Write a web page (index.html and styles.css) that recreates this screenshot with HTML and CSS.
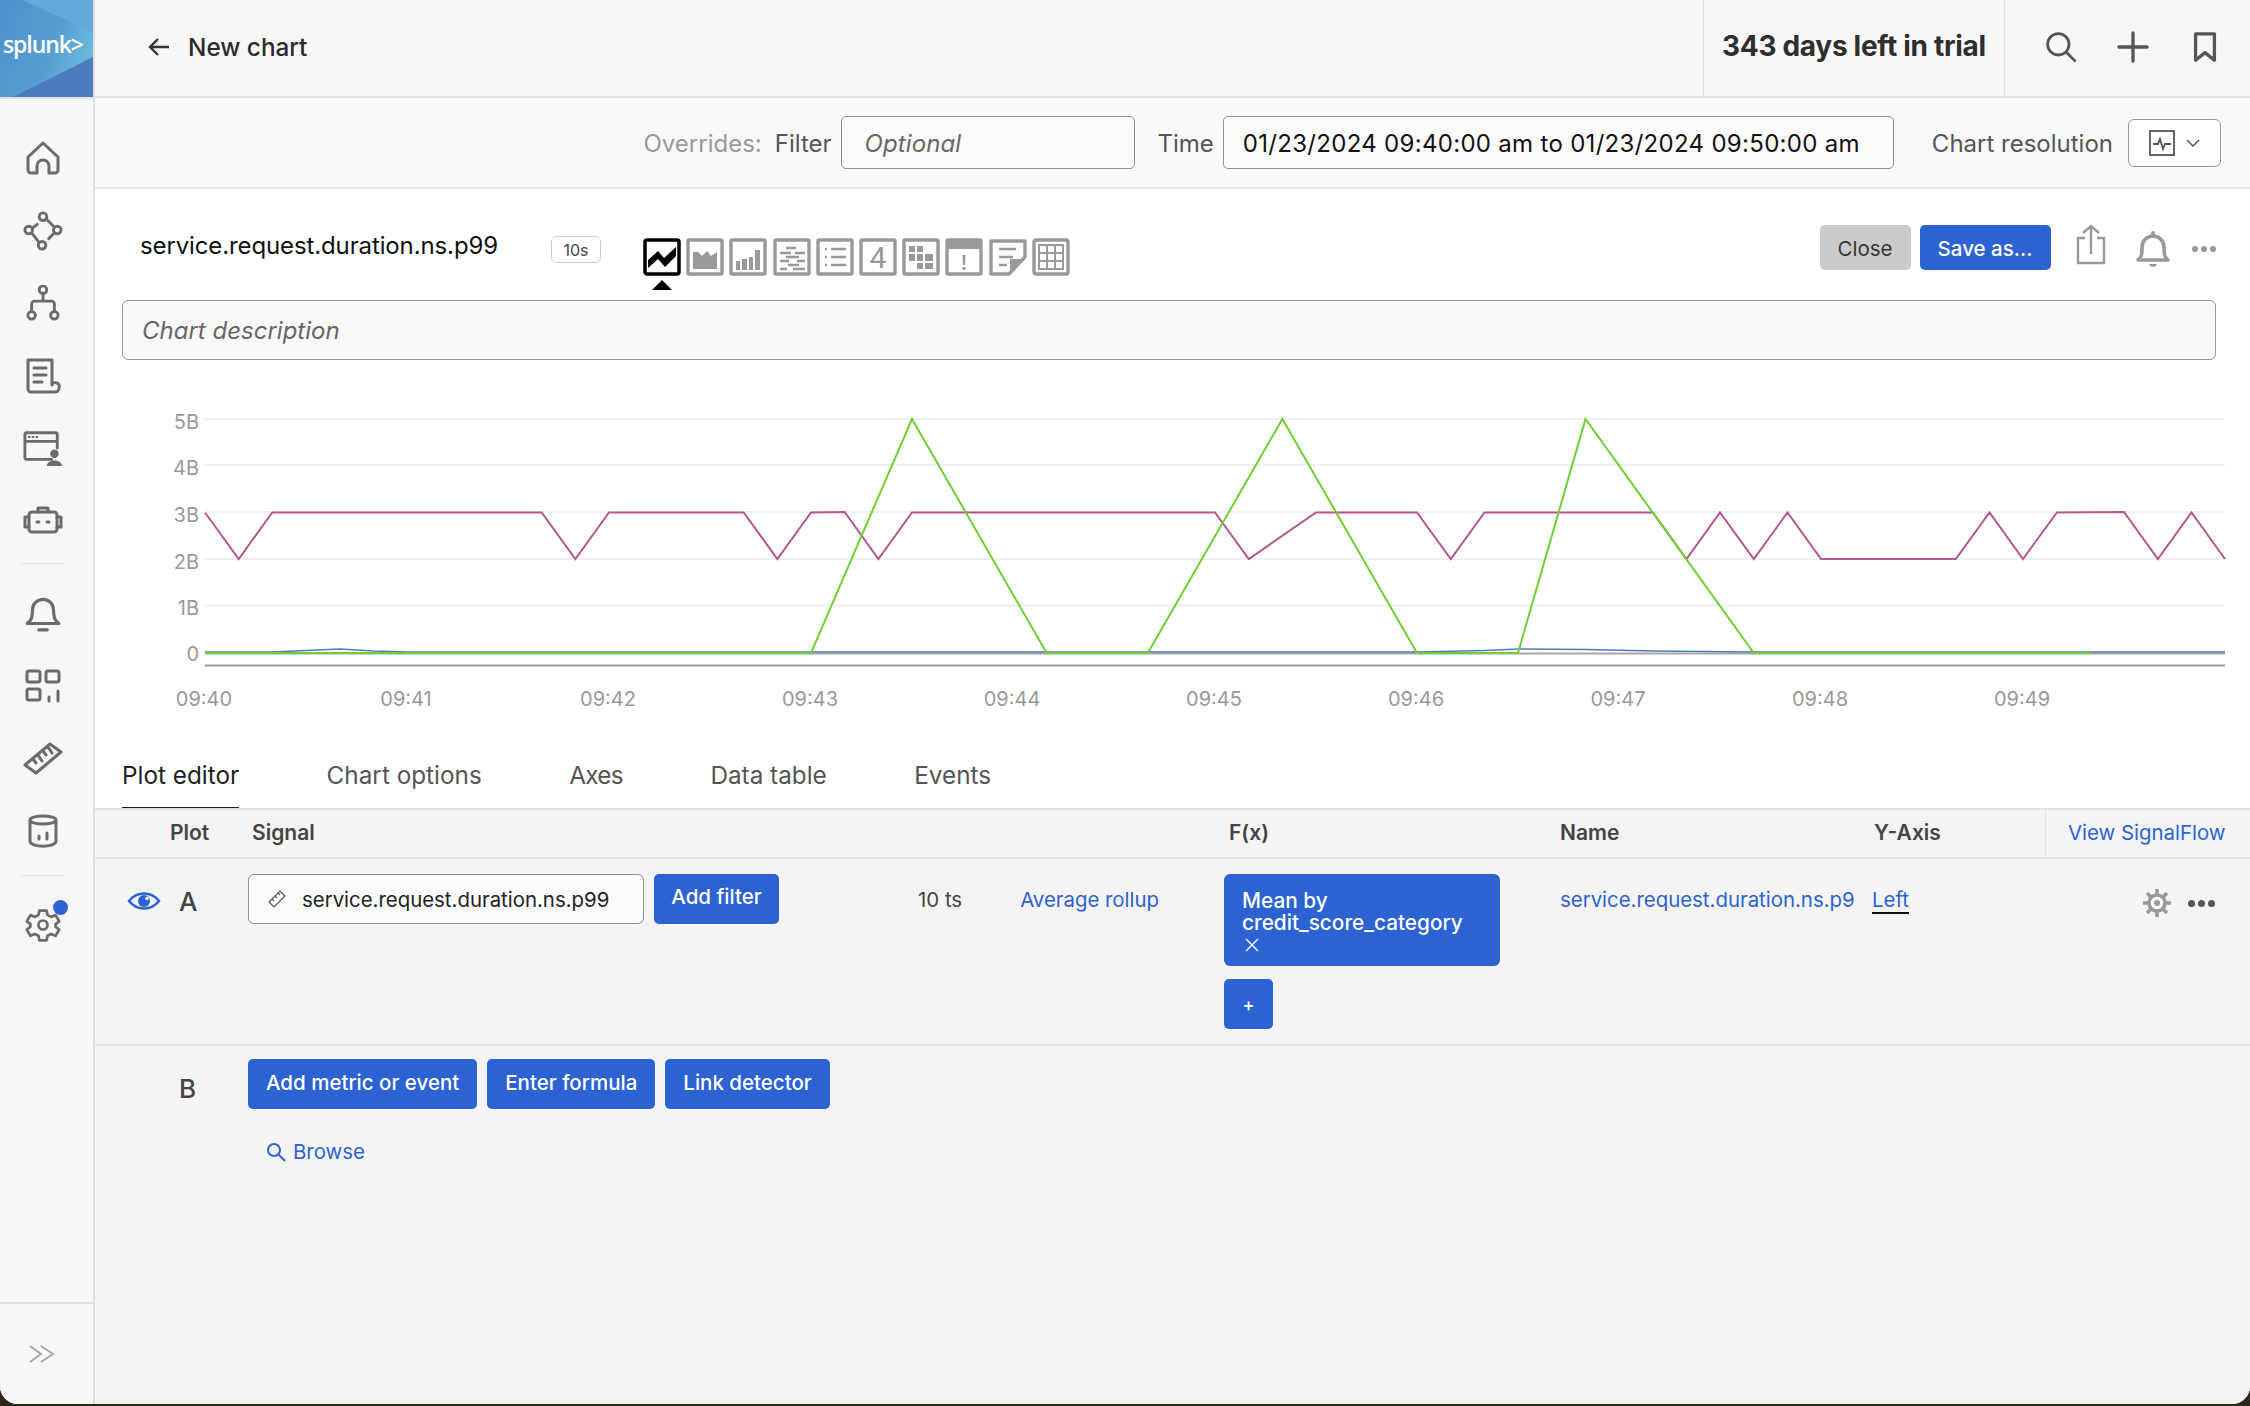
FILE: index.html
```html
<!DOCTYPE html>
<html lang="en">
<head>
    <meta charset="UTF-8">
    <title>New chart</title>
    <link rel="stylesheet" href="styles.css">
</head>
<body>
<div class="app">

    <!-- left nav -->
    <aside class="sidebar">
        <svg class="logo" viewBox="0 0 93 97">
            <defs>
                <linearGradient id="logoMid" x1="0" y1="0.2" x2="1" y2="0.6">
                    <stop offset="0" stop-color="#4b93cb"/>
                    <stop offset="0.6" stop-color="#569ed2"/>
                    <stop offset="1" stop-color="#6cbcdc"/>
                </linearGradient>
            </defs>
            <rect width="93" height="97" fill="url(#logoMid)"/>
            <polygon points="22,0 93,0 93,32" fill="#62aad7"/>
            <polygon points="13,97 93,57 93,97" fill="#4d7bc0"/>
            <text class="logo-text" x="3" y="53">splunk&gt;</text>
        </svg>
        <nav class="nav">
            <a class="nav-item"><svg class="nav-icon" viewBox="0 0 36 36"><path d="M3 17 18 3l15 14v13a3 3 0 0 1-3 3h-6v-7a6 6 0 0 0-12 0v7H6a3 3 0 0 1-3-3z"/></svg></a>
            <a class="nav-item"><svg class="nav-icon nav-icon-lg" viewBox="0 0 42 42"><circle cx="21" cy="6" r="4"/><circle cx="6" cy="20" r="4"/><circle cx="36" cy="20" r="4"/><circle cx="20" cy="36" r="4"/><path d="M25 9l7 7M10 18l5-4M32 24l-5 5M10 24l6 8"/></svg></a>
            <a class="nav-item"><svg class="nav-icon" viewBox="0 0 36 38"><circle cx="18" cy="5" r="4"/><circle cx="6" cy="32" r="4"/><circle cx="30" cy="32" r="4"/><path d="M18 9v8M6 28v-8a3 3 0 0 1 3-3h18a3 3 0 0 1 3 3v8"/></svg></a>
            <a class="nav-item"><svg class="nav-icon" viewBox="0 0 36 36"><path d="M27 27V2H3v29a3 3 0 0 0 3 3h24a4 4 0 0 0 4-4 3 3 0 0 0-7-3zM27 34h-2"/><path d="M9 10h12M9 17h12M9 24h8"/></svg></a>
            <a class="nav-item"><svg class="nav-icon nav-icon-lg" viewBox="0 0 42 40"><path d="M30 32H4a2 2 0 0 1-2-2V6a2 2 0 0 1 2-2h30a2 2 0 0 1 2 2v14M2 13h34"/><circle class="solid" cx="33" cy="26" r="4.500"/><path class="solid" d="M25 39c0-8 16-8 16 0z"/><path class="thin" d="M6 8.500h1M10 8.500h1M14 8.500h1"/></svg></a>
            <a class="nav-item"><svg class="nav-icon nav-icon-lg" viewBox="0 0 40 28"><rect x="6" y="5" width="28" height="20" rx="3"/><path d="M15 5V1h10v4M6 10H2v10h4M34 10h4v10h-4M14 15h2M24 15h2"/></svg></a>
            <div class="nav-sep"></div>
            <a class="nav-item"><svg class="nav-icon nav-icon-lg" viewBox="0 0 36 38"><path d="M3 29c4-3 5-6 5-13a10 10 0 0 1 20 0c0 7 1 10 5 13zM14 35h8"/></svg></a>
            <a class="nav-item"><svg class="nav-icon" viewBox="0 0 36 34"><rect x="2" y="2" width="13" height="11" rx="2"/><rect x="21" y="2" width="13" height="11" rx="2"/><rect x="2" y="20" width="13" height="11" rx="2"/><path d="M24 32v-4M33 32V22"/></svg></a>
            <a class="nav-item"><svg class="nav-icon nav-icon-lg" viewBox="0 0 40 40"><path d="M2 27 27 6l11 8-25 21zM10 21l3 4M15 17l4 6M20 13l3 4M25 9l4 6"/></svg></a>
            <a class="nav-item"><svg class="nav-icon" viewBox="0 0 36 36"><path d="M5 8v20c0 7 26 7 26 0V8"/><ellipse cx="18" cy="7" rx="13" ry="4"/><path d="M14 23v3M22 20v6"/></svg></a>
            <div class="nav-sep nav-sep-low"></div>
            <a class="nav-item nav-item-gear">
                <svg class="nav-icon" viewBox="0 0 40 40"><path d="M16 4h8l1 5 4 2 5-2 4 7-4 3v3l4 3-4 7-5-2-4 2-1 5h-8l-1-5-4-2-5 2-4-7 4-3v-3l-4-3 4-7 5 2 4-2z"/><circle cx="20" cy="20" r="5"/></svg>
                <span class="gear-dot"></span>
            </a>
        </nav>
        <div class="collapse">
            <svg class="collapse-icon" viewBox="0 0 26 20"><path d="M1 2l11 8L1 18M12 2l12 8-12 8"/></svg>
        </div>
    </aside>

    <main class="main">
        <header class="topbar">
            <div class="crumb">
                <svg class="back-icon" viewBox="0 0 22 20"><path d="M21 10H2M10 2l-8 8 8 8"/></svg>
                <span>New chart</span>
            </div>
            <div class="trial">343 days left in trial</div>
            <div class="top-icons">
                <svg class="top-icon" viewBox="0 0 30 30"><circle cx="12.500" cy="12.500" r="10"/><path d="M20 20l8 8"/></svg>
                <svg class="top-icon" viewBox="0 0 34 34"><path class="bold" d="M17 2v30M2 17h30"/></svg>
                <svg class="top-icon" viewBox="0 0 26 34"><path class="bold" d="M3 3h20v28l-10-8-10 8z"/></svg>
            </div>
        </header>

        <section class="overrides">
            <span class="muted">Overrides:</span>
            <label class="lbl lbl-filter">Filter</label>
            <div class="field field-filter">Optional</div>
            <label class="lbl lbl-time">Time</label>
            <div class="field field-time">01/23/2024 09:40:00 am to 01/23/2024 09:50:00 am</div>
            <label class="lbl lbl-res">Chart resolution</label>
            <div class="res-select">
                <svg class="res-icon" viewBox="0 0 26 26"><rect x="1" y="1" width="24" height="24"/><path d="M4 14h5l2-5 3 10 2-5h6"/></svg>
                <svg class="chev" viewBox="0 0 14 8"><path d="M1 1l6 6 6-6"/></svg>
            </div>
        </section>

        <section class="chart-panel">
            <div class="chart-head">
                <h1 class="chart-title">service.request.duration.ns.p99</h1>
                <span class="res-badge">10s</span>
                <div class="types">
                    <div class="type type-on">
                        <svg viewBox="0 0 38 38"><rect x="2" y="2" width="34" height="34" rx="2"/><polygon points="5,22 15,13 21,20 33,9 33,18 22,29 15,21 5,30"/></svg>
                    </div>
                    <div class="type">
                        <svg viewBox="0 0 38 38"><rect x="2" y="2" width="34" height="34" rx="1"/><polygon class="f" points="7,31 7,14 12,14 16,18 21,13 25,18 31,14 31,31"/></svg>
                    </div>
                    <div class="type">
                        <svg viewBox="0 0 38 38"><rect x="2" y="2" width="34" height="34" rx="1"/><path class="f" d="M7 23h4v9H7zM13 21h5v11h-5zM20 19h4v13h-4zM26 12h5v20h-5z"/></svg>
                    </div>
                    <div class="type">
                        <svg viewBox="0 0 38 38"><rect x="2" y="2" width="34" height="34" rx="1"/><path class="ln" d="M13 10h10M7 15h11M22 15h10M13 19h13M7 23h9M24 23h8M15 27h11M7 31h7M20 31h12"/></svg>
                    </div>
                    <div class="type">
                        <svg viewBox="0 0 38 38"><rect x="2" y="2" width="34" height="34" rx="1"/><path class="ln" d="M9 11h2M15 11h15M9 19h2M15 19h15M9 27h2M15 27h15"/></svg>
                    </div>
                    <div class="type">
                        <svg viewBox="0 0 38 38"><rect x="2" y="2" width="34" height="34" rx="1"/><text class="four" x="19" y="30">4</text></svg>
                    </div>
                    <div class="type">
                        <svg viewBox="0 0 38 38"><rect x="2" y="2" width="34" height="34" rx="1"/><path class="f" d="M7 8h6v6H7zM15 8h6v6h-6zM7 16h6v7H7zM15 16h6v7h-6zM23 16h8v7h-8zM15 25h6v6h-6zM23 25h8v6h-8z"/></svg>
                    </div>
                    <div class="type">
                        <svg viewBox="0 0 38 38"><rect x="2" y="2" width="34" height="34" rx="1"/><rect class="f" x="1" y="1" width="36" height="10"/><path class="f" d="M17.500 17h3l-.5 10h-2zM17.500 29h3v3h-3z"/></svg>
                    </div>
                    <div class="type">
                        <svg viewBox="0 0 38 38"><path class="note" d="M2 3h34v16L20 36H2z"/><polygon class="f" points="21,36 21,21 36,21"/><path class="ln" d="M10 11h17M10 19h14M10 27h8"/></svg>
                    </div>
                    <div class="type">
                        <svg viewBox="0 0 38 38"><rect x="2" y="2" width="34" height="34" rx="2"/><path class="ln-2" d="M7 7h24v24H7zM15 7v24M23 7v24M7 15h24M7 23h24"/></svg>
                    </div>
                </div>
                <div class="chart-actions">
                    <button class="btn btn-grey">Close</button>
                    <button class="btn btn-blue btn-save">Save as…</button>
                    <svg class="act-share" viewBox="0 0 30 42"><path d="M9 14H2v25h26V14h-7M15 30V2M7 9l8-7 8 7"/></svg>
                    <svg class="act-bell" viewBox="0 0 34 40"><path d="M2 31c4-3 4-7 4-13a11 11 0 0 1 22 0c0 6 0 10 4 13z"/><circle cx="17" cy="4" r="2"/><path d="M13 35c1 4 7 4 8 0z"/></svg>
                    <span class="act-dots"><i></i><i></i><i></i></span>
                </div>
            </div>

            <div class="desc">Chart description</div>

            <svg class="plot" viewBox="95 359 2155 386">
                <g class="grid">
                    <path d="M205 418H2225M205 464H2225M205 511H2225M205 558H2225M205 604.500H2225"/>
                </g>
                <path class="axis-line" d="M205 664.500H2225"/>
                <g class="y-labels">
                    <text x="199" y="428">5B</text>
                    <text x="199" y="474">4B</text>
                    <text x="199" y="521">3B</text>
                    <text x="199" y="568">2B</text>
                    <text x="199" y="614">1B</text>
                    <text x="199" y="660">0</text>
                </g>
                <g class="x-labels">
                    <text x="204" y="705">09:40</text>
                    <text x="406" y="705">09:41</text>
                    <text x="608" y="705">09:42</text>
                    <text x="810" y="705">09:43</text>
                    <text x="1012" y="705">09:44</text>
                    <text x="1214" y="705">09:45</text>
                    <text x="1416" y="705">09:46</text>
                    <text x="1618" y="705">09:47</text>
                    <text x="1820" y="705">09:48</text>
                    <text x="2022" y="705">09:49</text>
                </g>
                <path class="s-grey" d="M205 652.500H2225"/>
                <polyline class="s-blue" points="205,651 272,651 306,649.500 340,648 374,650 408,651 1417,651 1485,649.500 1519,648 1586,648.500 1654,650 1754,651 2225,651"/>
                <polyline class="s-pink" points="205,511.500 238.700,558 272.300,511.500 541.700,511.500 575.400,558 609,511.500 743.700,511.500 777.400,558 811,511.500 844.700,511 878.400,558 912,511.500 1215,511.500 1248.800,558 1316,511.500 1417,511.500 1450.800,558 1484.500,511.500 1652.800,511.500 1686.500,558 1720,511.500 1753.800,558 1787.500,511.500 1821,558 1955.800,558 1989.500,511.500 2023,558 2056.900,511.500 2124,511 2157.900,558 2191.500,511.500 2225,558"/>
                <polyline class="s-green" points="205,652 811,652 912,418 1046.700,652 1147.800,652 1282.400,418 1417,652 1518,652 1585.500,418 1753.800,652 2090.500,652"/>
            </svg>

            <div class="tabs">
                <a class="tab tab-on">Plot editor</a>
                <a class="tab">Chart options</a>
                <a class="tab tab-axes">Axes</a>
                <a class="tab">Data table</a>
                <a class="tab">Events</a>
            </div>
        </section>

        <section class="editor">
            <div class="cols cols-head">
                <div class="th th-plot">Plot</div>
                <div class="th th-signal">Signal</div>
                <div class="th th-fx">F(x)</div>
                <div class="th th-name">Name</div>
                <div class="th th-y">Y-Axis</div>
                <div class="th-flow"><a class="link">View SignalFlow</a></div>
            </div>

            <div class="cols row-a">
                <div class="plot-id">
                    <svg class="eye" viewBox="0 0 34 24"><path d="M2 12C10 2 24 2 32 12 24 22 10 22 2 12z"/><circle class="pupil" cx="17" cy="12" r="6"/><circle class="glint" cx="20" cy="9.500" r="1.800"/></svg>
                    <span class="letter">A</span>
                </div>
                <div class="signal-cell">
                    <div class="signal-input">
                        <svg class="tag-ruler" viewBox="0 0 18 18"><path d="M1 12 12 1l5 5L6 17zM4 9l2 2M7 6l2 2M10 3l2 2"/></svg>
                        <span>service.request.duration.ns.p99</span>
                    </div>
                    <button class="btn btn-blue btn-filter">Add filter</button>
                    <span class="ts">10 ts</span>
                    <a class="link rollup">Average rollup</a>
                </div>
                <div class="fx-cell">
                    <div class="fx-chip">
                        <span>Mean by<br>credit_score_category</span>
                        <svg class="fx-x" viewBox="0 0 14 14"><path d="M1 1l12 12M13 1 1 13"/></svg>
                    </div>
                    <button class="btn btn-blue btn-plus">+</button>
                </div>
                <div class="name-cell"><a class="link">service.request.duration.ns.p9</a></div>
                <div class="y-cell"><a class="link y-left">Left</a></div>
                <div class="row-actions">
                    <svg class="row-gear" viewBox="0 0 30 30"><circle cx="15" cy="15" r="8"/><circle class="hole" cx="15" cy="15" r="3"/><path d="M15 1v6M15 23v6M1 15h6M23 15h6M5 5l4.500 4.500M20.500 20.500 25 25M25 5l-4.500 4.500M9.500 20.500 5 25"/></svg>
                    <span class="row-dots"><i></i><i></i><i></i></span>
                </div>
            </div>

            <div class="row-b">
                <span class="letter letter-b">B</span>
                <div class="row-b-body">
                    <div class="row-b-btns">
                        <button class="btn btn-blue btn-b">Add metric or event</button>
                        <button class="btn btn-blue btn-b">Enter formula</button>
                        <button class="btn btn-blue btn-b">Link detector</button>
                    </div>
                    <a class="link browse">
                        <svg class="browse-icon" viewBox="0 0 20 20"><circle cx="8" cy="8" r="6"/><path d="M12.500 12.500 19 19"/></svg>
                        Browse
                    </a>
                </div>
            </div>
        </section>
    </main>
</div>
</body>
</html>
```

FILE: styles.css
```css
*{
    margin: 0; padding: 0;
    box-sizing: border-box;
}
html, body{
    height: 100%;
    overflow: hidden;
}
body{
    background: #2c2618;
    font-family: Inter, "Liberation Sans", sans-serif;
    font-size: 20.400px;
    color: #333;
}
svg{
    display: block;
    flex: none;
}
.app{
    display: flex;
    height: 1404px;
    background: #f4f4f4;
    border-radius: 0 0 18px 18px;
    overflow: hidden;
}

/* sidebar */
.sidebar{
    width: 95px;
    flex: none;
    display: flex;
    flex-direction: column;
    background: #f7f7f7;
    border-right: 2px solid #e0e0e0;
}
.logo{
    width: 93px;
    height: 97px;
}
.logo-text{
    font-family: "Open Sans", sans-serif;
    font-size: 23px;
    font-weight: 600;
    letter-spacing: -1.100px;
    fill: #fff;
}
.nav{
    flex: 1;
    padding-top: 23px;
    border-top: 2px solid #e0e0e0;
}
.nav-item{
    height: 72.500px;
    padding-right: 8px;
    display: flex;
    align-items: center;
    justify-content: center;
    position: relative;
}
.nav-icon{
    width: 36px;
    height: 36px;
    fill: none;
    stroke: #6b6b6b;
    stroke-width: 3;
    stroke-linejoin: round;
    stroke-linecap: round;
}
.nav-icon-lg{
    width: 40px;
    height: 40px;
}
.nav-icon .solid{
    fill: #6b6b6b;
    stroke: none;
}
.nav-icon .thin{
    stroke-width: 2;
}
.nav-sep{
    height: 1px;
    margin: 6px 28px 13px 21px;
    background: #e0e0e0;
}
.nav-sep-low{
    margin-top: 8px;
}
.gear-dot{
    position: absolute;
    top: 11px;
    left: 53px;
    width: 15px;
    height: 15px;
    border-radius: 50%;
    background: #2d64d4;
}
.collapse{
    height: 102px;
    border-top: 2px solid #e0e0e0;
    padding: 40px 0 0 29px;
}
.collapse-icon{
    width: 26px;
    height: 20px;
    fill: none;
    stroke: #a8a8a8;
    stroke-width: 2;
}

/* top bar */
.main{
    flex: 1;
    min-width: 0;
    display: flex;
    flex-direction: column;
}
.topbar{
    height: 98px;
    flex: none;
    display: flex;
    align-items: stretch;
    background: #f7f7f7;
    border-bottom: 2px solid #e2e2e2;
}
.crumb{
    flex: 1;
    display: flex;
    align-items: center;
    gap: 18px;
    padding: 0 0 2px 53px;
    font-size: 24.300px;
    font-weight: 500;
    color: #2b2b2b;
}
.back-icon{
    width: 22px;
    height: 20px;
    fill: none;
    stroke: #333;
    stroke-width: 2.400;
}
.trial{
    width: 302px;
    display: flex;
    align-items: center;
    padding: 0 0 4px 18px;
    border-left: 1px solid #e0e0e0;
    border-right: 1px solid #e0e0e0;
    font-size: 28px;
    font-weight: 700;
    letter-spacing: -0.3px;
    color: #2e2e2e;
}
.top-icons{
    width: 245px;
    display: flex;
    align-items: center;
    gap: 40px;
    padding: 0 0 2px 40px;
}
.top-icon{
    width: 32px;
    height: 32px;
    fill: none;
    stroke: #555;
    stroke-width: 2.600;
    stroke-linecap: round;
    stroke-linejoin: round;
}
.top-icon .bold{
    stroke-width: 3.500;
}

/* overrides bar */
.overrides{
    height: 91px;
    flex: none;
    display: flex;
    align-items: center;
    padding-right: 29px;
    justify-content: flex-end;
    background: #f9f9f9;
    border-bottom: 2px solid #e6e6e6;
    font-size: 24px;
}
.muted{
    padding-top: 2px;
    color: #999;
}
.lbl{
    padding-top: 2px;
    color: #555;
}
.lbl-filter{
    margin: 0 9px 0 13px;
}
.lbl-time{
    margin: 0 9px 0 23px;
}
.lbl-res{
    margin: 0 15px 0 38px;
}
.field{
    height: 53px;
    display: flex;
    align-items: center;
    padding: 2px 0 0 19px;
    background: #fbfbfb;
    border: 1px solid #8f8f8f;
    border-radius: 5px;
    color: #111;
}
.field-filter{
    width: 294px;
    padding-left: 23px;
    font-style: italic;
    letter-spacing: 0.1px;
    color: #666;
}
.field-time{
    width: 671px;
    letter-spacing: 0.3px;
}
.res-select{
    width: 93px;
    height: 48px;
    display: flex;
    align-items: center;
    gap: 11px;
    padding-left: 20px;
    background: #fff;
    border: 1px solid #999;
    border-radius: 6px;
}
.res-icon{
    width: 26px;
    height: 26px;
    fill: none;
    stroke: #555;
    stroke-width: 1.800;
}
.chev{
    width: 14px;
    height: 8px;
    fill: none;
    stroke: #555;
    stroke-width: 1.500;
}

/* chart panel */
.chart-panel{
    flex: none;
    height: 619px;
    display: flex;
    flex-direction: column;
    background: #fff;
}
.chart-head{
    height: 111px;
    flex: none;
    display: flex;
    align-items: flex-start;
    padding: 36px 34px 0 45px;
}
.chart-title{
    margin: 3px 0 0 0;
    width: 411px;
    font-size: 24px;
    font-weight: 400;
    line-height: 36px;
    letter-spacing: -0.12px;
    color: #111;
}
.res-badge{
    margin-top: 11px;
    width: 50px;
    height: 27px;
    display: flex;
    align-items: center;
    justify-content: center;
    border: 1px solid #ccc;
    border-radius: 6px;
    font-size: 16px;
    color: #444;
}
.types{
    margin: 13px 0 0 42px;
    display: flex;
    gap: 5.200px;
}
.type{
    width: 38px;
    height: 38px;
    position: relative;
}
.type svg{
    width: 38px;
    height: 38px;
    fill: #fff;
    stroke: #999;
    stroke-width: 3.400;
}
.type .f{
    fill: #999;
    stroke: none;
}
.type .ln{
    stroke-width: 2.500;
    fill: none;
}
.type .ln-2{
    stroke-width: 2;
    fill: none;
}
.type .note{
    stroke-linejoin: round;
}
.type .four{
    font-size: 30px;
    font-family: Roboto, sans-serif;
    text-anchor: middle;
    fill: #999;
    stroke: none;
}
.type-on svg{
    stroke: #000;
    stroke-width: 3.500;
}
.type-on polygon{
    fill: #000;
    stroke: none;
}
.type-on::after{
    content: "";
    position: absolute;
    left: 9px;
    top: 42px;
    border-left: 10px solid transparent;
    border-right: 10px solid transparent;
    border-bottom: 10px solid #000;
}
.chart-actions{
    margin-left: auto;
    display: flex;
    align-items: flex-start;
}
.btn{
    border: none;
    border-radius: 5px;
    font-family: inherit;
    font-size: 20.500px;
    cursor: pointer;
}
.btn-blue{
    background: #2d62d3;
    color: #fff;
    font-weight: 500;
}
.btn-grey{
    width: 91px;
    height: 45px;
    padding-top: 2px;
    background: #cacaca;
    color: #333;
}
.btn-save{
    width: 131px;
    height: 45px;
    margin-left: 9px;
    padding-top: 2px;
}
.act-share{
    width: 30px;
    height: 42px;
    margin: -1px 0 0 25px;
    fill: none;
    stroke: #999;
    stroke-width: 2.400;
}
.act-bell{
    width: 34px;
    height: 40px;
    margin: 4px 0 0 30px;
    fill: #fff;
    stroke: #999;
    stroke-width: 3.600;
    stroke-linejoin: round;
}
.act-bell circle, .act-bell path:last-child{
    fill: #999;
    stroke: none;
}
.act-dots, .row-dots{
    display: flex;
    gap: 3px;
}
.act-dots{
    margin: 21px 0 0 22.500px;
}
.act-dots i, .row-dots i{
    width: 6px;
    height: 6px;
    border-radius: 50%;
    background: #999;
}
.desc{
    height: 60px;
    flex: none;
    margin: 0 34px 0 27px;
    padding-left: 19px;
    display: flex;
    align-items: center;
    background: #f9f9f9;
    border: 1.500px solid #999;
    border-radius: 6px;
    font-size: 24px;
    font-style: italic;
    color: #666;
}
.plot{
    width: 2155px;
    height: 386px;
    flex: none;
}
.grid path{
    fill: none;
    stroke: #ececec;
    stroke-width: 1.500;
}
.axis-line{
    fill: none;
    stroke: #999;
    stroke-width: 2;
}
.y-labels text, .x-labels text{
    font-size: 20px;
    fill: #999;
}
.y-labels text{
    text-anchor: end;
}
.x-labels text{
    text-anchor: middle;
}
.s-grey{
    fill: none;
    stroke: #a8a8a8;
    stroke-width: 2;
}
.s-blue{
    fill: none;
    stroke: #3d6fae;
    stroke-width: 1.600;
    opacity: 0.9;
}
.s-pink{
    fill: none;
    stroke: #b5568f;
    stroke-width: 2;
}
.s-green{
    fill: none;
    stroke: #6fd034;
    stroke-width: 2;
}

/* tabs */
.tabs{
    flex: 1;
    display: flex;
    gap: 87.500px;
    padding-left: 27px;
}
.tab{
    height: 62px;
    padding-top: 14px;
    font-size: 24.300px;
    color: #555;
}
.tab-on{
    color: #222;
    border-bottom: 1.500px solid #222;
}
.tab-axes{
    letter-spacing: -0.7px;
}

/* plot editor */
.editor{
    flex: 1;
    background: #f4f4f4;
}
.cols{
    display: grid;
    grid-template-columns: 153px 976px 332px 316px 173px 1fr;
}
.cols-head{
    height: 51px;
    align-items: center;
    border-top: 2px solid #e2e2e2;
    border-bottom: 2px solid #e2e2e2;
}
.th{
    padding-bottom: 2px;
    font-size: 21px;
    font-weight: 600;
    color: #444;
}
.th-plot{
    padding-left: 75px;
}
.th-signal{
    padding-left: 4px;
}
.th-fx{
    padding-left: 5px;
}
.th-name{
    padding-left: 4px;
}
.th-y{
    padding-left: 2px;
}
.th-flow{
    height: 100%;
    display: flex;
    align-items: center;
    padding: 0 0 2px 22px;
    border-left: 1px solid #e0e0e0;
}
.link{
    color: #2d62d3;
}
.row-a{
    height: 187px;
    padding-top: 15px;
    border-bottom: 2px solid #e2e2e2;
}
.plot-id{
    display: flex;
    align-items: flex-start;
    padding: 15px 0 0 32px;
}
.eye{
    width: 34px;
    height: 24px;
    fill: none;
    stroke: #2d62d3;
    stroke-width: 2.500;
}
.eye .pupil{
    fill: #2d62d3;
    stroke: none;
}
.eye .glint{
    fill: #fff;
    stroke: none;
}
.letter{
    font-size: 26px;
    font-weight: 500;
    color: #444;
}
.plot-id .letter{
    margin: -3px 0 0 18px;
}
.signal-cell{
    display: flex;
    align-items: flex-start;
}
.signal-input{
    width: 396px;
    height: 50px;
    display: flex;
    align-items: center;
    gap: 16px;
    padding-left: 19px;
    background: #fbfbfb;
    border: 1px solid #8f8f8f;
    border-radius: 6px;
    color: #222;
}
.tag-ruler{
    width: 18px;
    height: 18px;
    fill: none;
    stroke: #555;
    stroke-width: 1.200;
}
.btn-filter{
    width: 125px;
    height: 50px;
    margin-left: 10px;
    padding-bottom: 5px;
}
.ts{
    margin: 13px 0 0 139px;
    color: #444;
}
.rollup{
    margin: 13px 0 0 58px;
}
.fx-chip{
    width: 276px;
    height: 92px;
    padding: 16px 18px 0;
    background: #2d62d3;
    border-radius: 6px;
    color: #fff;
    font-size: 20.800px;
    line-height: 22px;
    font-weight: 500;
}
.fx-x{
    width: 14px;
    height: 14px;
    margin: 4px 0 0 3px;
    fill: none;
    stroke: #fff;
    stroke-width: 1.400;
}
.btn-plus{
    width: 49px;
    height: 50px;
    margin-top: 13px;
    display: block;
    font-size: 18px;
}
.name-cell{
    padding: 13px 0 0 4px;
    white-space: nowrap;
}
.y-cell{
    padding-top: 13px;
}
.y-left{
    border-bottom: 2px solid #111;
}
.row-actions{
    display: flex;
    align-items: center;
    gap: 16px;
    height: 30px;
    padding: 0 0 0 97px;
    margin-top: 14px;
}
.row-gear{
    width: 30px;
    height: 30px;
    fill: #fff;
    stroke: #999;
    stroke-width: 3.600;
}
.row-gear .hole{
    fill: #999;
    stroke: none;
}
.row-dots i{
    width: 7px;
    height: 7px;
    background: #555;
}
.row-b{
    display: flex;
}
.letter-b{
    width: 153px;
    padding: 27px 0 0 84px;
}
.row-b-body{
    padding-top: 13px;
}
.row-b-btns{
    display: flex;
    gap: 10px;
}
.btn-b{
    height: 50px;
    padding: 0 18px 3px;
}
.browse{
    margin: 30px 0 0 18px;
    display: flex;
    align-items: center;
    gap: 7px;
}
.browse-icon{
    width: 20px;
    height: 20px;
    fill: none;
    stroke: #2d62d3;
    stroke-width: 2;
}
```
